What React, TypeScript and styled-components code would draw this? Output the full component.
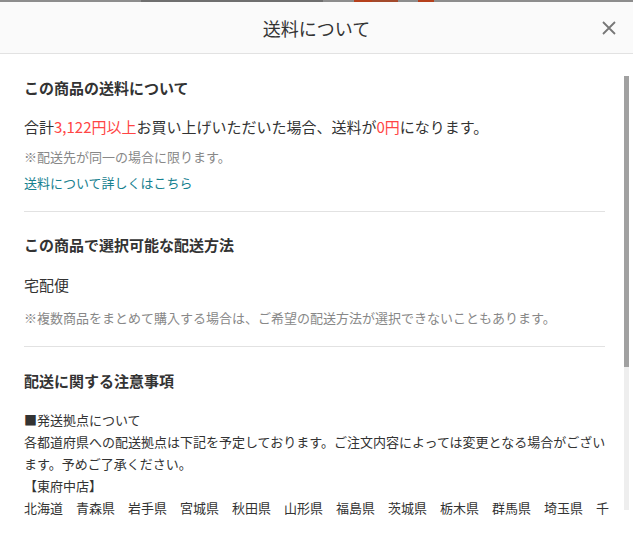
import React from 'react';
import styled, {createGlobalStyle} from 'styled-components';

const GlobalStyle = createGlobalStyle`
  html, body {
    margin: 0;
    padding: 0;
    height: 100%;
    background: #ffffff;
  }
  body {
    font-family: "Noto Sans CJK JP", "Noto Sans", sans-serif;
    color: #333333;
  }
  #root {
    height: 100%;
  }
`;

const Modal = styled.div`
  width: 633px;
  height: 540px;
  display: flex;
  flex-direction: column;
  background: #ffffff;
`;

const BackdropStrip = styled.div`
  height: 2px;
  flex-shrink: 0;
  display: flex;
  background: #8d8d8d;
`;

const StripPiece = styled.div<{$w: number; $c: string}>`
  width: ${({$w}) => $w}px;
  background: ${({$c}) => $c};
`;

const Header = styled.header`
  height: 51px;
  flex-shrink: 0;
  position: relative;
  display: flex;
  align-items: center;
  justify-content: center;
  background: #fafafa;
  border-bottom: 1px solid #e2e2e2;
`;

const HeaderTitle = styled.h1`
  margin: 0;
  font-size: 18px;
  font-weight: 400;
  color: #333333;
`;

const CloseButton = styled.button`
  position: absolute;
  right: 14px;
  top: 16px;
  width: 20px;
  height: 20px;
  padding: 0;
  border: none;
  background: transparent;
  display: flex;
  align-items: center;
  justify-content: center;
  cursor: pointer;
`;

const BodyRow = styled.div`
  height: 462px;
  flex-shrink: 0;
  display: flex;
  padding-right: 4px;
`;

const Scroller = styled.div`
  width: 625px;
  height: 100%;
  overflow-y: scroll;
  box-sizing: border-box;
  padding: 0 14px 0 24px;
  scrollbar-width: none;

  &::-webkit-scrollbar {
    display: none;
  }
`;

const ScrollRail = styled.div`
  width: 5px;
  margin: 22px 0 6px;
  display: flex;
  flex-direction: column;
  background: #eeeeee;
`;

const ScrollThumb = styled.div<{$size: number}>`
  height: ${({$size}) => $size}%;
  background: #a1a1a1;
`;

const Section = styled.section<{$top: number; $bottom: number; $last?: boolean}>`
  padding-top: ${({$top}) => $top}px;
  padding-bottom: ${({$bottom}) => $bottom}px;
  border-bottom: ${({$last}) => ($last ? 'none' : '1px solid #e2e2e2')};
  margin-right: ${({$last}) => ($last ? '0' : '5px')};
`;

const SectionTitle = styled.h2`
  margin: 0;
  font-size: 15px;
  line-height: 22px;
  font-weight: 700;
  color: #333333;
`;

const Lead = styled.p<{$mt: number}>`
  margin: ${({$mt}) => $mt}px 0 0;
  font-size: 15px;
  line-height: 22px;
  color: #333333;
`;

const Price = styled.span`
  color: #ff4545;
`;

const Note = styled.p<{$mt: number}>`
  margin: ${({$mt}) => $mt}px 0 0;
  font-size: 13px;
  line-height: 20px;
  color: #888888;
`;

const DetailLink = styled.a`
  display: block;
  margin-top: 6px;
  font-size: 13px;
  line-height: 20px;
  color: #17818f;
  text-decoration: none;
`;

const Notice = styled.div`
  margin-top: 17px;
  font-size: 13px;
  line-height: 22px;
  color: #333333;
  white-space: pre-wrap;
  word-break: break-all;
`;

const noticeText = `■発送拠点について
各都道府県への配送拠点は下記を予定しております。ご注文内容によっては変更となる場合がございます。予めご了承ください。
【東府中店】
北海道　青森県　岩手県　宮城県　秋田県　山形県　福島県　茨城県　栃木県　群馬県　埼玉県　千葉県　東京都　神奈川県　新潟県　富山県　石川県　福井県　山梨県　長野県　岐阜県　静岡県　愛知県　三重県
【大阪店】
滋賀県　京都府　大阪府　兵庫県　奈良県　和歌山県　鳥取県　島根県　岡山県　広島県　山口県　徳島県　香川県　愛媛県　高知県
【福岡店】
福岡県　佐賀県　長崎県　熊本県　大分県　宮崎県　鹿児島県　沖縄県`;

export default function App() {
  return (
    <>
      <GlobalStyle />
      <Modal>
        <BackdropStrip>
          <StripPiece $w={141} $c="#8d8d8d" />
          <StripPiece $w={182} $c="#6f6f6f" />
          <StripPiece $w={31} $c="#8d8d8d" />
          <StripPiece $w={18} $c="#b5401c" />
          <StripPiece $w={26} $c="#a34a2c" />
          <StripPiece $w={20} $c="#8d8d8d" />
          <StripPiece $w={16} $c="#b5401c" />
        </BackdropStrip>
        <Header>
          <HeaderTitle>送料について</HeaderTitle>
          <CloseButton aria-label="閉じる">
            <svg width="14" height="14" viewBox="0 0 14 14">
              <path d="M1 1L13 13M13 1L1 13" stroke="#777777" strokeWidth="1.8" fill="none" />
            </svg>
          </CloseButton>
        </Header>
        <BodyRow>
          <Scroller>
            <Section $top={23} $bottom={18}>
              <SectionTitle>この商品の送料について</SectionTitle>
              <Lead $mt={17}>
                合計<Price>3,122円以上</Price>お買い上げいただいた場合、送料が<Price>0円</Price>になります。
              </Lead>
              <Note $mt={9}>※配送先が同一の場合に限ります。</Note>
              <DetailLink href="#">送料について詳しくはこちら</DetailLink>
            </Section>
            <Section $top={22} $bottom={18}>
              <SectionTitle>この商品で選択可能な配送方法</SectionTitle>
              <Lead $mt={18}>宅配便</Lead>
              <Note $mt={12}>※複数商品をまとめて購入する場合は、ご希望の配送方法が選択できないこともあります。</Note>
            </Section>
            <Section $top={23} $bottom={24} $last>
              <SectionTitle>配送に関する注意事項</SectionTitle>
              <Notice>{noticeText}</Notice>
            </Section>
          </Scroller>
          <ScrollRail>
            <ScrollThumb $size={67} />
          </ScrollRail>
        </BodyRow>
      </Modal>
    </>
  );
}
